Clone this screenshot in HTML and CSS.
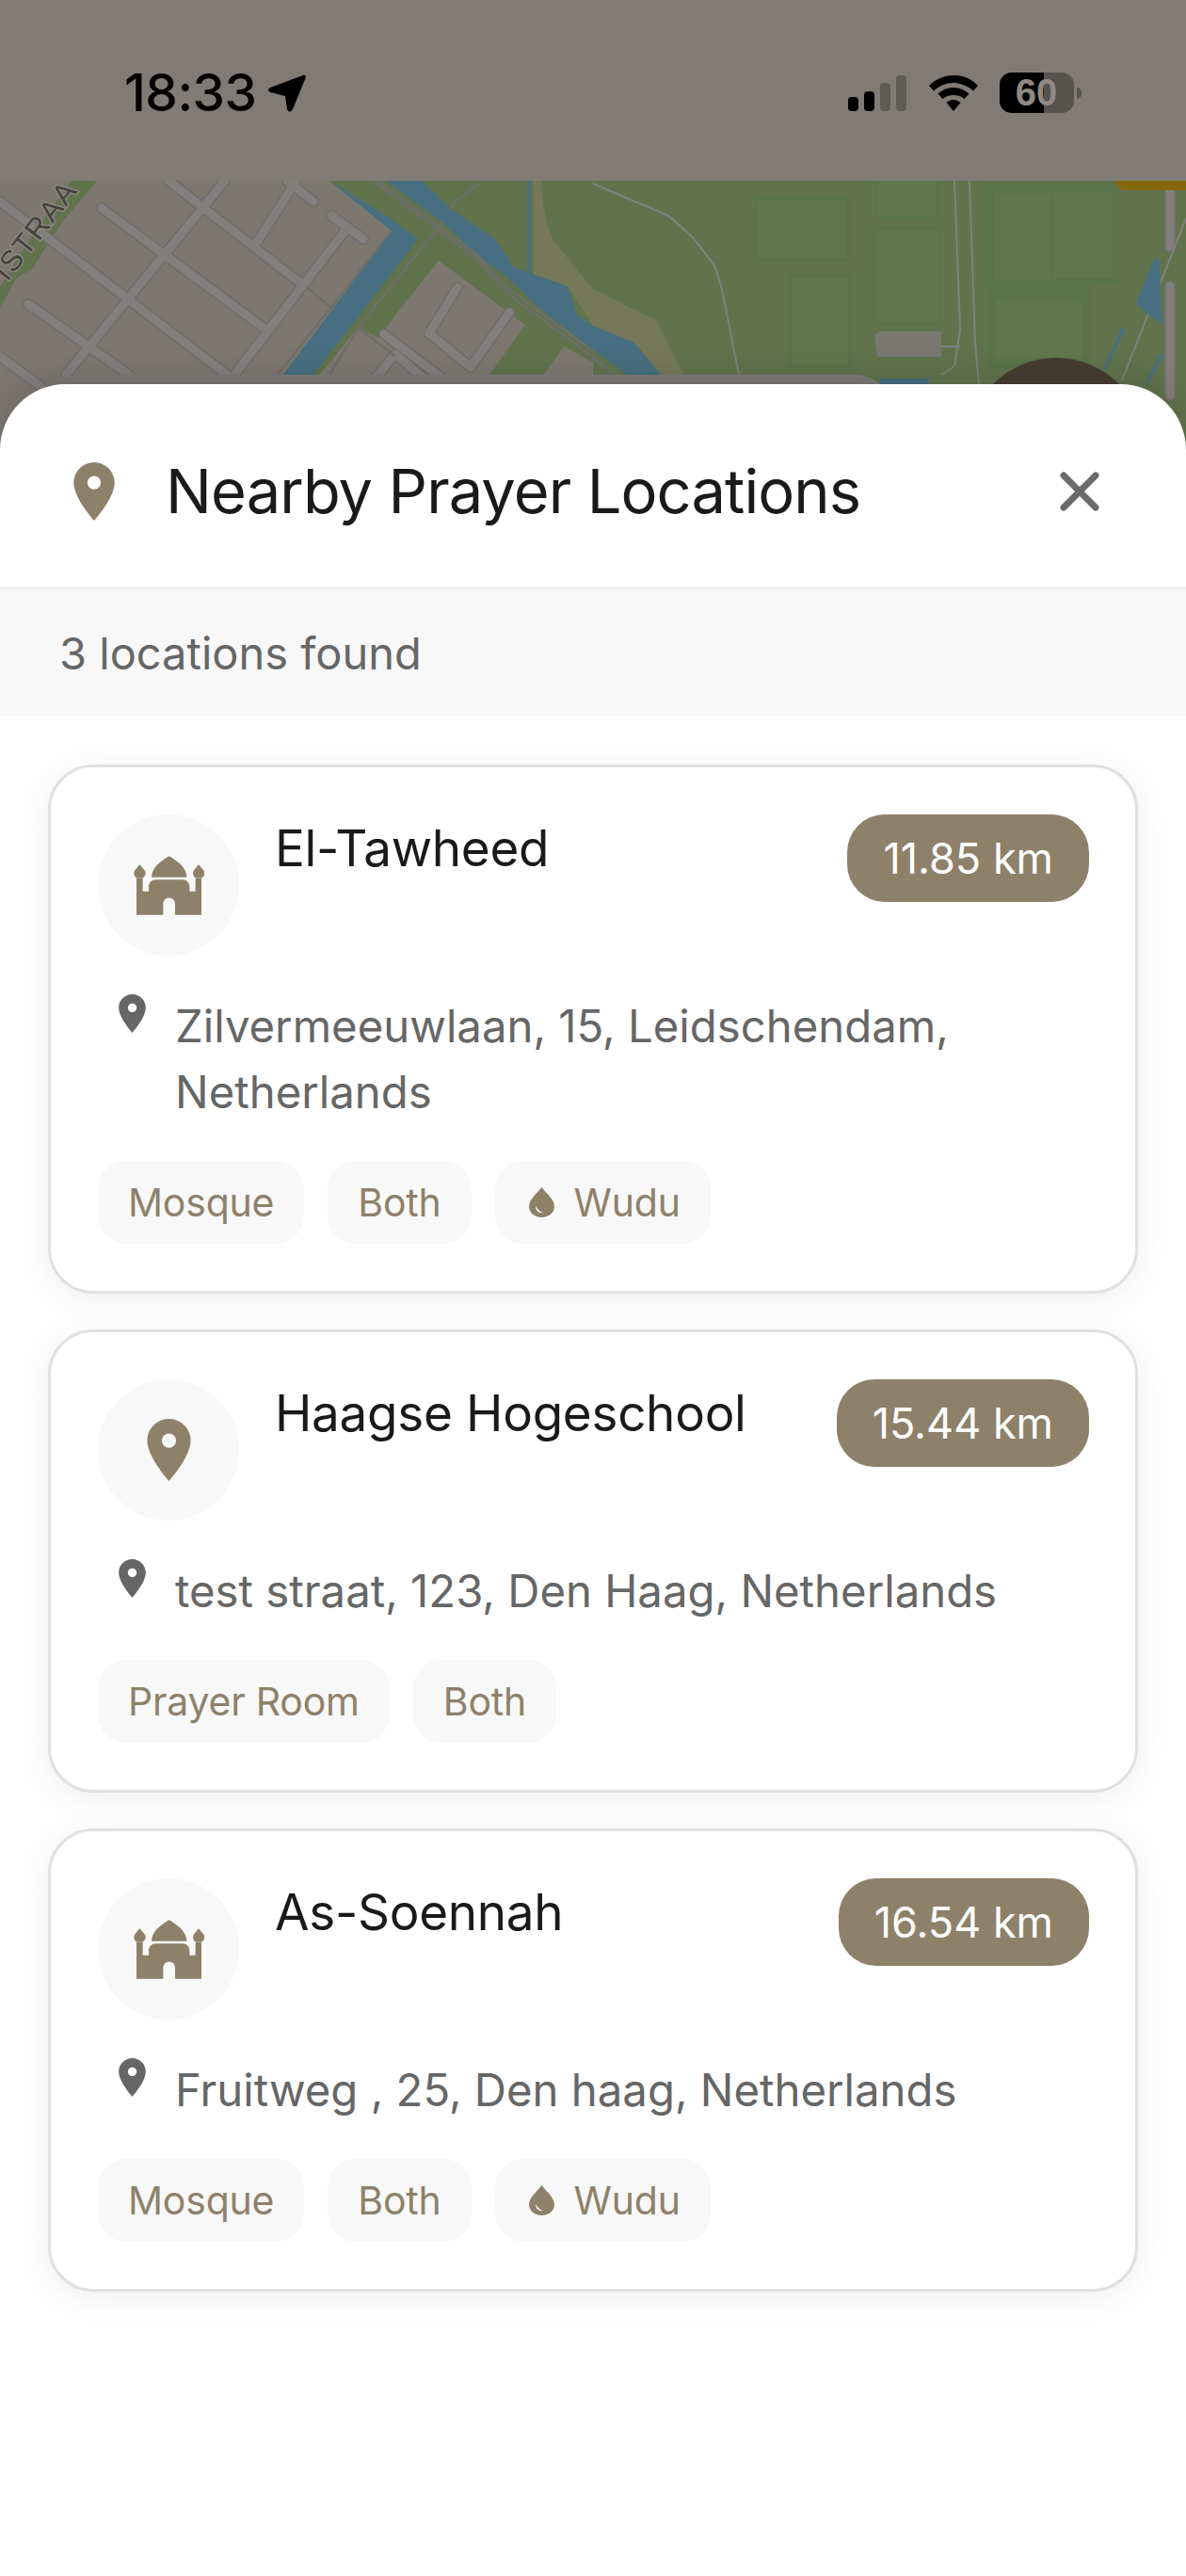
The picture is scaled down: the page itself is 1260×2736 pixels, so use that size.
FILE: index.html
```html
<!DOCTYPE html>
<html lang="en">
<head>
<meta charset="utf-8">
<title>Nearby Prayer Locations</title>
<link rel="stylesheet" href="styles.css">
</head>
<body>
<svg class="defs" width="0" height="0" aria-hidden="true">
  <symbol id="pin" viewBox="5 2 14 20"><path fill-rule="evenodd" d="M12 2C8.13 2 5 5.13 5 9c0 5.25 7 13 7 13s7-7.75 7-13c0-3.87-3.13-7-7-7zm0 9.3a2.3 2.3 0 0 1 0-4.6 2.3 2.3 0 0 1 0 4.6z"/></symbol>
  <symbol id="mosque" viewBox="183 198 225 188"><path d="M240 266C240 235 265 217 296 198C327 217 352 235 352 266Z"/><path d="M192 386V268H212V311H231V297C231 282 240 273 255 273H337C352 273 361 282 361 297V311H380V268H399V386H315V350A19 19 0 0 0 277 350V386Z"/><path d="M202 225L219 245C223 252 221 262 212 268H192C184 262 182 252 186 245Z"/><path d="M390 225L407 245C411 252 409 262 400 268H380C372 262 370 252 374 245Z"/></symbol>
  <symbol id="drop" viewBox="0 0 27 32"><path fill-rule="evenodd" d="M13.5 0C9 6 0 13 0 20.500C0 27 6 32 13.500 32S27 27 27 20.500C27 13 18 6 13.500 0ZM7 20C7 25 10 27 15 27.500C11 25 9 23.500 7 20Z"/></symbol>
  <g id="roads">
    <path d="M0 214L241 398"/>
    <path d="M108 221L285 352"/>
    <path d="M179 192L321 302"/>
    <path d="M239 192L70 398"/>
    <path d="M368 243L249 398"/>
    <path d="M313 195L273 257"/>
    <path d="M305 192L333 214"/>
    <path d="M352 229L386 254"/>
    <path d="M30 323L137 398"/>
    <path d="M0 379L44 411"/>
    <path d="M486 305L456 354L500 390L541 332"/>
    <path d="M408 355L470 402"/>
    <path d="M420 376L396 405M420 376L450 402"/>
    <path d="M1243 203V262M1243 304V420"/>
  </g>
</svg>
<div class="screen">
  <header class="status">
    <div class="status-left">
      <span class="time">18:33</span>
      <svg class="arrow" viewBox="0 0 40 40"><path d="M37 1C39 0 40.500 1.500 39.500 4L26 37C24.500 40.500 20.500 40 20 36.500L18 23L2 19C-0.500 18 -0.500 15 2 14Z"/></svg>
    </div>
    <div class="status-right">
      <div class="signal">
        <i class="bar b1 on"></i><i class="bar b2 on"></i><i class="bar b3"></i><i class="bar b4"></i>
      </div>
      <svg class="wifi" viewBox="0 0 52 38"><path d="M26 0C36 0 45 4 52 11L47 16.500C41 11 34 8 26 8S11 11 5 16.500L0 11C7 4 16 0 26 0Z"/><path d="M26 13C32.500 13 38 15.500 42.500 19.500L37.500 25C34.500 22.500 30.500 21 26 21S17.500 22.500 14.500 25L9.500 19.500C14 15.500 19.500 13 26 13Z"/><path d="M26 26C29 26 31.500 27 33.500 29L26 38L18.500 29C20.500 27 23 26 26 26Z"/></svg>
      <div class="battery"><div class="battery-body"><div class="battery-fill"></div><span class="battery-num">60</span></div><i class="battery-nub"></i></div>
    </div>
  </header>

  <div class="map">
    <svg class="map-art" viewBox="0 192 1260 300" width="1260" height="300">
      <rect x="0" y="192" width="1260" height="300" fill="#7c7870"/>
      <path fill="#60734d" d="M76 192H103L66 236L34 286L18 295L0 327V305L20 272L48 230Z"/>
      <path fill="#60734d" d="M350 192H1260V492H270L301 398L416 245Z"/>
      <path fill="#7c7870" d="M466 277L558 345L520 398V420H340V398L380 348L402 359L422 332Z"/>
      <path fill="#7c7870" d="M599 368L578 398V420H630V385Z"/>
      <path fill="#76785a" d="M567 192H575C576 215 580 240 589 257L630 307L698 341L726 398H702L674 364L630 346L603 304L567 292Z"/>
      <path fill="#476f81" d="M350 192L418 234L444 254L333 398V420H290L301 398L416 245Z"/>
      <path fill="#476f81" d="M410 192H448L478 221L526 254L546 284L603 304L613 334L630 346L674 364L702 398H666L630 371L570 325L538 293L506 271L470 236Z"/>
      <path fill="none" stroke="#476f81" stroke-width="3" d="M562 192V292"/>
      <g fill="#61764e" stroke="#5a7349" stroke-width="4">
        <rect x="803" y="211" width="98" height="64"/>
        <rect x="839" y="293" width="64" height="96"/>
        <rect x="931" y="186" width="65" height="46"/>
        <rect x="929" y="243" width="69" height="100"/>
      </g>
      <rect x="1046" y="195" width="144" height="107" fill="#5a7349"/>
      <rect x="1050" y="303" width="108" height="88" fill="#5a7349"/>
      <rect x="1056" y="205" width="60" height="93" fill="#61764e"/>
      <rect x="1120" y="204" width="62" height="91" fill="#61764e"/>
      <rect x="1058" y="320" width="92" height="60" fill="#61764e"/>
      <path fill="#7a7872" d="M929 356L934 352L1000 352V379H932Z"/>
      <use href="#roads" fill="none" stroke="#716e69" stroke-width="12" stroke-linecap="round" stroke-linejoin="round"/>
      <use href="#roads" fill="none" stroke="#817f7d" stroke-width="9" stroke-linecap="round" stroke-linejoin="round"/>
      <g fill="none" stroke="#6f6e6a" stroke-width="2.500">
        <path d="M396 192L506 275L538 311L630 379L700 440"/>
        <path d="M402 192L506 270L538 305L630 373"/>
        <path d="M470 236L382 346L350 398"/>
        <path d="M416 245L295 398"/>
        <path d="M512 192L480 218L478 224"/>
        <path d="M326 305L356 330"/>
        <path d="M380 348L420 378"/>
      </g>
      <g fill="none" stroke="#7f807c" stroke-width="2">
        <path d="M630 195L710 229L736 252L759 282L767 307L785 398"/>
        <path d="M1014 192L1020 350L1014 389L1000 398"/>
        <path d="M1030 192L1036 364L1040 408"/>
        <path d="M1000 368H1020"/>
        <path d="M1260 232L1192 404"/>
      </g>
      <g fill="#476f81">
        <path d="M1226 275H1231L1235 345L1207 323Z"/>
        <path d="M1192 348L1195 350L1175 393H1172Z"/>
        <path d="M1233 375L1236 377L1220 407H1217Z"/>
        <rect x="935" y="402" width="52" height="8"/>
      </g>
      <path fill="#85680c" d="M1184 192H1260V202H1196Q1188 202 1184 192Z"/>
      <circle cx="1122" cy="474" r="94" fill="#463d32"/>
      <rect x="40" y="398" width="910" height="90" rx="42" fill="#7b7a78"/>
      <text class="map-label" x="0" y="0" text-anchor="end" transform="translate(84 202) rotate(-52)">ISTRAA</text>
    </svg>
  </div>

  <section class="sheet">
    <div class="sheet-head">
      <svg class="head-pin"><use href="#pin"/></svg>
      <h1 class="sheet-title">Nearby Prayer Locations</h1>
      <svg class="close" viewBox="0 0 40 40"><path d="M3 3L37 37M37 3L3 37"/></svg>
    </div>
    <div class="count">3 locations found</div>
    <div class="list">
      <article class="card">
        <div class="card-top">
          <div class="avatar"><svg class="avatar-mosque"><use href="#mosque"/></svg></div>
          <h2 class="name">El-Tawheed</h2>
          <span class="dist">11.85 km</span>
        </div>
        <div class="addr"><svg class="addr-pin"><use href="#pin"/></svg><p class="addr-text">Zilvermeeuwlaan, 15, Leidschendam, Netherlands</p></div>
        <div class="tags">
          <span class="tag">Mosque</span><span class="tag">Both</span>
          <span class="tag"><svg class="tag-drop"><use href="#drop"/></svg>Wudu</span>
        </div>
      </article>
      <article class="card">
        <div class="card-top">
          <div class="avatar"><svg class="avatar-pin"><use href="#pin"/></svg></div>
          <h2 class="name">Haagse Hogeschool</h2>
          <span class="dist">15.44 km</span>
        </div>
        <div class="addr"><svg class="addr-pin"><use href="#pin"/></svg><p class="addr-text">test straat, 123, Den Haag, Netherlands</p></div>
        <div class="tags">
          <span class="tag">Prayer Room</span><span class="tag">Both</span>
        </div>
      </article>
      <article class="card">
        <div class="card-top">
          <div class="avatar"><svg class="avatar-mosque"><use href="#mosque"/></svg></div>
          <h2 class="name">As-Soennah</h2>
          <span class="dist">16.54 km</span>
        </div>
        <div class="addr"><svg class="addr-pin"><use href="#pin"/></svg><p class="addr-text">Fruitweg , 25, Den haag, Netherlands</p></div>
        <div class="tags">
          <span class="tag">Mosque</span><span class="tag">Both</span>
          <span class="tag"><svg class="tag-drop"><use href="#drop"/></svg>Wudu</span>
        </div>
      </article>
    </div>
  </section>
</div>
</body>
</html>
```
FILE: styles.css
```css
* { box-sizing: border-box; }
html, body { margin: 0; padding: 0; background: #fff; }
body { font-family: Inter, "Liberation Sans", sans-serif; }
.defs { position: absolute; }
.screen { width: 1260px; height: 2736px; display: flex; flex-direction: column; overflow: hidden; }

.status { height: 192px; flex: none; background: #807b74; display: flex; justify-content: space-between; align-items: flex-start; padding: 77px 111px 0 132px; position: relative; z-index: 1; }
.status-left { display: flex; align-items: center; gap: 12px; height: 43px; }
.time { font-size: 55px; font-weight: 500; line-height: 43px; color: #000; letter-spacing: -.5px; }
.arrow { width: 40px; height: 40px; fill: #000; }
.status-right { display: flex; align-items: flex-end; height: 43px; }
.signal { display: flex; align-items: flex-end; gap: 6px; margin-right: 24px; margin-bottom: 2px; }
.bar { display: block; width: 11px; border-radius: 4px; background: #5f5b55; }
.bar.on { background: #000; }
.b1 { height: 15px; }
.b2 { height: 21px; }
.b3 { height: 30px; }
.b4 { height: 38px; }
.wifi { width: 52px; height: 38px; fill: #000; margin-right: 23px; margin-bottom: 2px; }
.battery { display: flex; align-items: center; gap: 3px; }
.battery-body { width: 79px; height: 43px; border-radius: 13px; background: #57534e; position: relative; display: flex; align-items: center; justify-content: center; }
.battery-fill { position: absolute; left: 0; top: 0; bottom: 0; width: 47px; background: #000; border-radius: 13px 0 0 13px; }
.battery-num { position: relative; font-family: "Liberation Sans", sans-serif; font-weight: 700; font-size: 40px; line-height: 43px; color: #8f8a84; margin-left: -1px; }
.battery-nub { display: block; width: 5px; height: 12px; border-radius: 0 6px 6px 0; background: #57534e; }

.map { height: 216px; flex: none; position: relative; }
.map-art { display: block; position: absolute; left: 0; top: 0; }
.map-label { font-family: "Liberation Sans", sans-serif; font-size: 31px; letter-spacing: 2px; fill: #45433f; stroke: #8a8680; stroke-width: 3px; paint-order: stroke; }

.sheet { flex: 1; position: relative; background: #fff; border-radius: 70px 70px 0 0; box-shadow: 0 -6px 36px rgba(0, 0, 0, .14); display: flex; flex-direction: column; }
.sheet-head { height: 218px; flex: none; display: flex; align-items: center; padding: 12px 93px 0 78px; border-bottom: 3px solid #eeeeee; }
.head-pin { width: 44px; height: 62px; fill: #8e816a; margin-right: 54px; flex: none; }
.sheet-title { flex: 1; margin: 0; font-size: 65px; font-weight: 400; color: #1a1a1a; letter-spacing: -.9px; line-height: 80px; }
.close { width: 40px; height: 40px; flex: none; stroke: #6b6b6b; stroke-width: 7; stroke-linecap: round; fill: none; overflow: visible; }

.count { height: 135px; flex: none; background: #f8f8f8; padding-left: 63px; font-size: 47px; color: #666; line-height: 136px; }

.list { padding: 51px 51px 0; display: flex; flex-direction: column; gap: 38px; }
.card { border: 3px solid #e0e0e0; border-radius: 48px; background: #fff; padding: 50px 49px 50px 50px; box-shadow: 0 6px 36px rgba(0, 0, 0, .07); }
.card-top { display: flex; align-items: flex-start; margin-bottom: 38px; }
.avatar { width: 150px; height: 150px; border-radius: 50%; background: #f8f8f8; flex: none; display: flex; align-items: center; justify-content: center; margin-right: 38px; }
.avatar-mosque { width: 75px; height: 63px; fill: #8e816a; }
.avatar-pin { width: 47px; height: 66px; fill: #8e816a; }
.name { flex: 1; margin: 0; padding-top: 3px; font-size: 53px; font-weight: 400; color: #1a1a1a; line-height: 66px; letter-spacing: -.3px; }
.dist { flex: none; height: 93px; padding: 0 38px; border-radius: 40px; background: #8e816a; color: #fff; font-size: 45px; line-height: 93px; }

.addr { display: flex; align-items: flex-start; margin-bottom: 40px; padding-left: 22px; }
.addr-pin { width: 29px; height: 41px; fill: #666; flex: none; margin: 3px 31px 0 0; }
.addr-text { margin: 2px 0 -2px; font-size: 47.300px; line-height: 70px; color: #666; }

.tags { display: flex; gap: 25px; }
.tag { height: 88px; display: flex; align-items: center; padding: 0 32px; border-radius: 30px; background: #f8f8f8; color: #8e816a; font-size: 41px; letter-spacing: -.2px; }
.tag-drop { width: 27px; height: 32px; fill: #8e816a; margin: 0 21px 0 4px; }
```
